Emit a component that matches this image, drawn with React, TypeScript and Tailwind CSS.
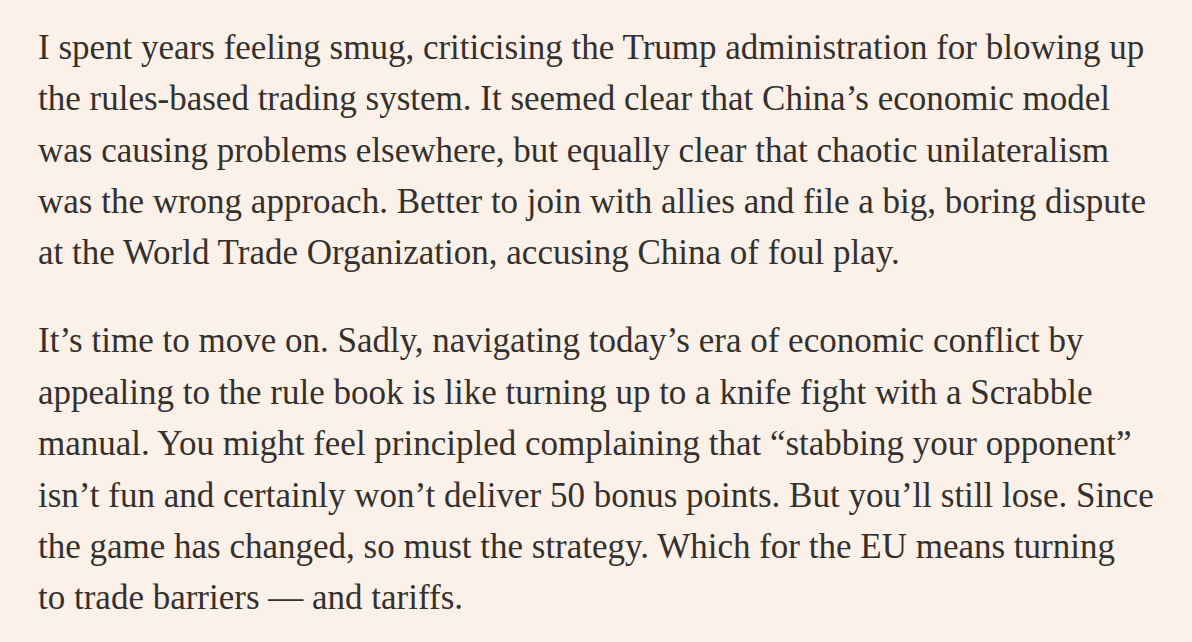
import React from "react";

const p1 = [
  "I spent years feeling smug, criticising the Trump administration for blowing up",
  "the rules-based trading system. It seemed clear that China\u2019s economic model",
  "was causing problems elsewhere, but equally clear that chaotic unilateralism",
  "was the wrong approach. Better to join with allies and file a big, boring dispute",
  "at the World Trade Organization, accusing China of foul play.",
];

const p2 = [
  "It\u2019s time to move on. Sadly, navigating today\u2019s era of economic conflict by",
  "appealing to the rule book is like turning up to a knife fight with a Scrabble",
  "manual. You might feel principled complaining that \u201cstabbing your opponent\u201d",
  "isn\u2019t fun and certainly won\u2019t deliver 50 bonus points. But you\u2019ll still lose. Since",
  "the game has changed, so must the strategy. Which for the EU means turning",
  "to trade barriers \u2014 and tariffs.",
];

function Para({ lines }: { lines: string[] }) {
  return (
    <p className="m-0">
      {lines.map((l, i) => (
        <span key={i} className="block whitespace-nowrap">
          {l}
        </span>
      ))}
    </p>
  );
}

export default function App() {
  return (
    <div
      className="w-[1192px] h-[642px] overflow-hidden bg-[#fcf1e8] text-[#33302e] pl-[38px] pt-[21.8px] text-[35px] leading-[51.4px] flex flex-col gap-[36.6px]"
      style={{ fontFamily: '"Liberation Serif", serif' }}
    >
      <Para lines={p1} />
      <Para lines={p2} />
    </div>
  );
}
